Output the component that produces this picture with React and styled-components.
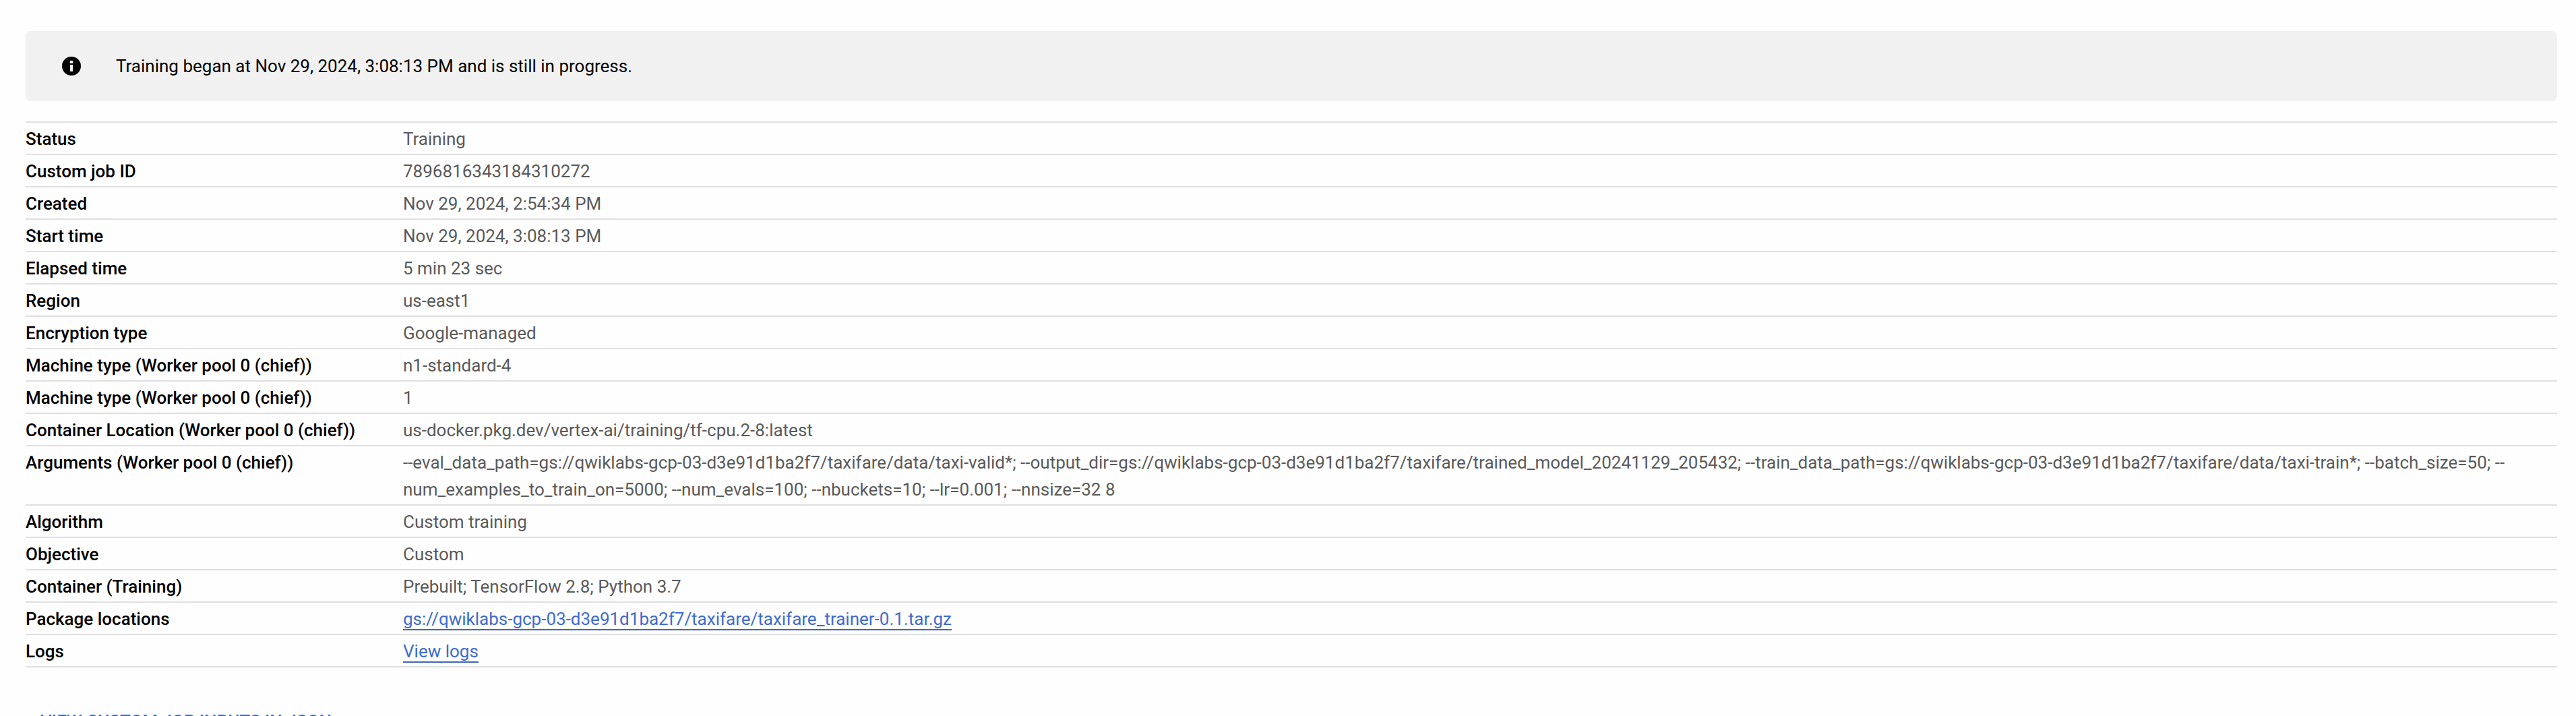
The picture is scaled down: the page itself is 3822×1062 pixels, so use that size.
import React from "react";
import styled, { createGlobalStyle } from "styled-components";

const GlobalStyle = createGlobalStyle`
  html, body { margin: 0; background: #fefefe; overflow: hidden; }
  * { box-sizing: border-box; }
`;

const Page = styled.main`
  display: flex;
  flex-direction: column;
  align-items: stretch;
  height: 1062px;
  padding: 46px 28px 0 38px;
  overflow: hidden;
  font-family: Roboto, "Liberation Sans", sans-serif;
  font-size: 26px;
  line-height: 40px;
  color: #000;
`;

const Banner = styled.section`
  display: flex;
  flex: none;
  align-items: center;
  gap: 52px;
  height: 104px;
  padding: 0 54px;
  border-radius: 8px;
  background: #f1f1f1;
`;

const InfoIcon = styled.svg`
  flex: none;
  width: 28px;
  height: 28px;
`;

const Details = styled.dl`
  flex: none;
  margin: 30px 0 0;
  border-top: 2px solid #dfdfdf;
`;

const Row = styled.div`
  display: grid;
  grid-template-columns: 560px 1fr;
  padding: 4px 0 2px;
  border-bottom: 2px solid #dfdfdf;
`;

const Label = styled.dt`
  font-weight: 500;
`;

const Value = styled.dd`
  margin: 0;
  padding-right: 40px;
  color: #5a5a5a;
`;

const Link = styled.a`
  display: inline-block;
  height: 37px;
  border-bottom: 2px solid #4066b4;
  color: #3e6bd0;
  text-decoration: none;
`;

const JsonButton = styled.button`
  align-self: flex-start;
  flex: none;
  margin: 60px 0 0;
  padding: 0 22px;
  border: 0;
  background: none;
  font: 500 26px/40px Roboto, "Liberation Sans", sans-serif;
  color: #3367d6;
  text-transform: uppercase;
`;

const rows = [
  ["Status", "Training"],
  ["Custom job ID", "7896816343184310272"],
  ["Created", "Nov 29, 2024, 2:54:34 PM"],
  ["Start time", "Nov 29, 2024, 3:08:13 PM"],
  ["Elapsed time", "5 min 23 sec"],
  ["Region", "us-east1"],
  ["Encryption type", "Google-managed"],
  ["Machine type (Worker pool 0 (chief))", "n1-standard-4"],
  ["Machine type (Worker pool 0 (chief))", "1"],
  ["Container Location (Worker pool 0 (chief))", "us-docker.pkg.dev/vertex-ai/training/tf-cpu.2-8:latest"],
  [
    "Arguments (Worker pool 0 (chief))",
    "--eval_data_path=gs://qwiklabs-gcp-03-d3e91d1ba2f7/taxifare/data/taxi-valid*; --output_dir=gs://qwiklabs-gcp-03-d3e91d1ba2f7/taxifare/trained_model_20241129_205432; --train_data_path=gs://qwiklabs-gcp-03-d3e91d1ba2f7/taxifare/data/taxi-train*; --batch_size=50; --num_examples_to_train_on=5000; --num_evals=100; --nbuckets=10; --lr=0.001; --nnsize=32 8",
  ],
  ["Algorithm", "Custom training"],
  ["Objective", "Custom"],
  ["Container (Training)", "Prebuilt; TensorFlow 2.8; Python 3.7"],
  ["Package locations", "gs://qwiklabs-gcp-03-d3e91d1ba2f7/taxifare/taxifare_trainer-0.1.tar.gz", true],
  ["Logs", "View logs", true],
];

export default function App() {
  return (
    <>
      <GlobalStyle />
      <Page>
        <Banner>
          <InfoIcon viewBox="0 0 28 28" aria-hidden="true">
            <circle cx="14" cy="14" r="14" fill="#000" />
            <path d="M12 6h4v4h-4zM12 12h4v10h-4z" fill="#f1f1f1" />
          </InfoIcon>
          <span>Training began at Nov 29, 2024, 3:08:13 PM and is still in progress.</span>
        </Banner>
        <Details>
          {rows.map(([label, value, isLink], i) => (
            <Row key={i}>
              <Label>{label}</Label>
              <Value>{isLink ? <Link href="#">{value}</Link> : value}</Value>
            </Row>
          ))}
        </Details>
        <JsonButton>View custom job inputs in JSON</JsonButton>
      </Page>
    </>
  );
}
